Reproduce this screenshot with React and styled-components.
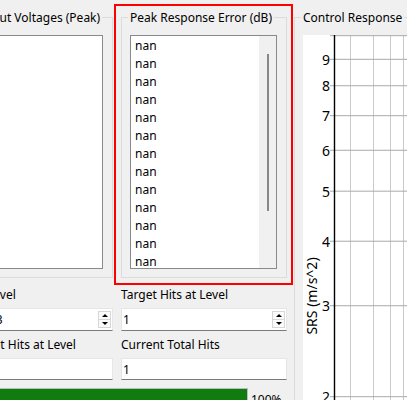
import React from 'react';
import styled, { createGlobalStyle } from 'styled-components';

const GlobalStyle = createGlobalStyle`
  html, body {
    margin: 0;
    background: #f0f0f0;
    overflow: hidden;
  }
  body {
    font-family: "Noto Sans", "DejaVu Sans", sans-serif;
    font-size: 12px;
    color: #000;
  }
`;

const Window = styled.div`
  display: flex;
  align-items: flex-start;
  gap: 7px;
  width: max-content;
  padding-top: 10px;
  margin-left: -38px;
`;

const Panel = styled.div`
  display: grid;
  grid-template-columns: 17px 126px 166px;
  column-gap: 8px;
  row-gap: 6px;
`;

const GroupBox = styled.fieldset`
  grid-column: ${p => p.$span || 'auto'};
  margin: 0 0 ${p => p.$gapBelow || 0}px;
  padding: 10px 9px 8px 8px;
  border: 1px solid #dcdcdc;
  min-width: 0;
  width: ${p => (p.$width ? `${p.$width}px` : 'auto')};
  box-sizing: border-box;
`;

const Legend = styled.legend`
  padding: 0 2px;
  margin-left: -2px;
  line-height: 15px;
  white-space: nowrap;
`;

const Highlight = styled.div`
  position: relative;
  display: flex;
  margin-bottom: 3px;

  & > fieldset {
    flex: 1;
  }

  &::after {
    content: '';
    position: absolute;
    inset: -6px -6px -7px -7px;
    border: 2px solid #ff0000;
    pointer-events: none;
  }
`;

const ListBox = styled.div`
  display: flex;
  height: 234px;
  box-sizing: border-box;
  border: 1px solid #868a8e;
  background: #fff;
  overflow: hidden;
`;

const Items = styled.div`
  flex: 1;
  padding: 1px 0 0 4px;
  overflow: hidden;
`;

const Item = styled.div`
  height: 18px;
  line-height: 18px;
`;

const ScrollTrack = styled.div`
  width: 17px;
  background: #f0f0f0;
  display: flex;
  justify-content: center;
  padding-top: 18px;
  box-sizing: border-box;
`;

const ScrollThumb = styled.div`
  width: 2px;
  height: 157px;
  background: #888;
`;

const Field = styled.div`
  grid-column: ${p => p.$col};
  display: flex;
  flex-direction: column;
  gap: 5px;
  min-width: 0;
`;

const FieldLabel = styled.div`
  line-height: 16px;
  white-space: nowrap;
`;

const Box = styled.div`
  display: flex;
  height: ${p => p.$h}px;
  box-sizing: border-box;
  background: #fff;
  border: 1px solid #e6e6e6;
  border-bottom-color: #7a7a7a;
`;

const Value = styled.div`
  flex: 1;
  padding-left: 1px;
  display: flex;
  align-items: center;
  white-space: nowrap;
  overflow: hidden;
`;

const SpinButtons = styled.div`
  display: flex;
  flex-direction: column;
  width: 13px;
  padding: 2px 1px 2px 0;
`;

const SpinButton = styled.div`
  flex: 1;
  display: flex;
  align-items: center;
  justify-content: center;
  border: 1px solid #d6d6d6;
  background: #fbfbfb;

  & + & {
    border-top: none;
  }
`;

const Arrow = styled.span`
  width: 0;
  height: 0;
  border-left: 3px solid transparent;
  border-right: 3px solid transparent;
  ${p => (p.$down ? 'border-top: 3px solid #000;' : 'border-bottom: 3px solid #000;')}
`;

const ProgressRow = styled.div`
  grid-column: 1 / -1;
  display: flex;
  align-items: center;
  margin-top: 2px;
`;

const ProgressBar = styled.div`
  flex: 1;
  height: 23px;
  box-sizing: border-box;
  border: 1px solid #bcbcbc;
  background: #e6e6e6;
`;

const ProgressChunk = styled.div`
  height: 100%;
  width: ${p => p.$value}%;
  background: #107c10;
`;

const ProgressText = styled.div`
  width: 36px;
  margin-left: 3px;
`;

const Canvas = styled.div`
  width: 300px;
  height: 480px;
  background: #fff;
`;

const SpinBox = ({ value }) => (
  <Box $h={23}>
    <Value>{value}</Value>
    <SpinButtons>
      <SpinButton><Arrow /></SpinButton>
      <SpinButton><Arrow $down /></SpinButton>
    </SpinButtons>
  </Box>
);

const LineEdit = ({ value }) => (
  <Box $h={22}>
    <Value>{value}</Value>
  </Box>
);

// log-scale y axis: 2 at y=361.7, one decade = 516.5px
const yOf = v => 361.7 - 516.5 * (Math.log10(v) - Math.log10(2));
const yTicks = [2, 3, 4, 5, 6, 7, 8, 9, 10];
const xGrid = [47, 70, 87, 100, 111, 121];

const Chart = () => (
  <svg width="300" height="480" style={{ display: 'block' }}>
    {xGrid.map(x => (
      <line key={x} x1={x + 0.5} y1="0" x2={x + 0.5} y2="480" stroke="#cbcbcb" strokeWidth="1" />
    ))}
    {yTicks.map(v => (
      <line key={v} x1="27" y1={yOf(v)} x2="300" y2={yOf(v)} stroke="#a9a9a9" strokeWidth="1" />
    ))}
    <line x1="31.5" y1="0" x2="31.5" y2="480" stroke="#000" strokeWidth="1.4" />
    {yTicks.filter(v => v < 10).map(v => (
      <text
        key={v}
        x="27"
        y={yOf(v) + 5.5}
        textAnchor="end"
        fontFamily='"Noto Sans", sans-serif'
        fontSize="14"
        fill="#000"
      >
        {v}
      </text>
    ))}
    <text
      x="14"
      y="261"
      transform="rotate(-90 14 261)"
      textAnchor="middle"
      fontFamily='"Noto Sans", sans-serif'
      fontSize="14"
      fill="#000"
    >
      SRS (m/s^2)
    </text>
  </svg>
);

const errors = Array.from({ length: 13 }, () => 'nan');

export default function App() {
  return (
    <>
      <GlobalStyle />
      <Window>
        <Panel>
          <GroupBox $span="1 / 3" $gapBelow={3}>
            <Legend>Output Voltages (Peak)</Legend>
            <ListBox />
          </GroupBox>
          <Highlight>
            <GroupBox>
              <Legend>Peak Response Error (dB)</Legend>
              <ListBox>
                <Items>
                  {errors.map((e, i) => (
                    <Item key={i}>{e}</Item>
                  ))}
                </Items>
                <ScrollTrack>
                  <ScrollThumb />
                </ScrollTrack>
              </ListBox>
            </GroupBox>
          </Highlight>

          <Field $col="2">
            <FieldLabel>Level</FieldLabel>
            <SpinBox value="13" />
          </Field>
          <Field $col="3">
            <FieldLabel>Target Hits at Level</FieldLabel>
            <SpinBox value="1" />
          </Field>
          <Field $col="2">
            <FieldLabel>Set Hits at Level</FieldLabel>
            <LineEdit value="" />
          </Field>
          <Field $col="3">
            <FieldLabel>Current Total Hits</FieldLabel>
            <LineEdit value="1" />
          </Field>

          <ProgressRow>
            <ProgressBar>
              <ProgressChunk $value={100} />
            </ProgressBar>
            <ProgressText>100%</ProgressText>
          </ProgressRow>
        </Panel>

        <GroupBox $width={320}>
          <Legend>Control Response</Legend>
          <Canvas>
            <Chart />
          </Canvas>
        </GroupBox>
      </Window>
    </>
  );
}
